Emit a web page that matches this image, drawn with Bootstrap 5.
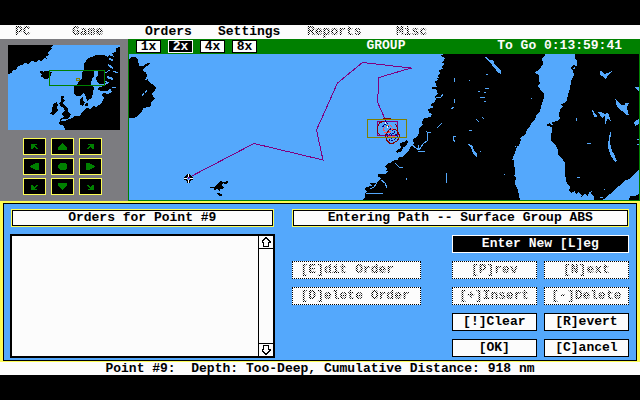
<!DOCTYPE html>
<html lang="en">
<head>
<meta charset="utf-8">
<meta name="viewport" content="width=device-width, initial-scale=1">
<title>Group orders</title>
<link href="https://cdn.jsdelivr.net/npm/bootstrap@5.3.0/dist/css/bootstrap.min.css" rel="stylesheet">
<style>
:root{--sea:#54a8fc;--paper:#fcfcfc;--glow:#fcfc54;--frame:#008000;--steel:#7c7c80}
body{background:#000;color:#000;font:bold 13px/14px "Liberation Mono",monospace;padding-top:25px}
h1,h2,button,.btn{font:inherit;margin:0}
svg{display:block;shape-rendering:crispEdges}
.menu-bar{background:var(--paper);display:grid;grid-template-columns:57px 73px 73px 89px 89px auto;padding-left:15px;height:14px}
.menu-bar button,.key{border:0;background:none;padding:0;text-align:left;color:#000;white-space:pre}
.menu-bar button:disabled span,.cmd:disabled span{color:transparent;background:repeating-conic-gradient(#000 0 25%,transparent 0 50%) 0 0/2px 2px;-webkit-background-clip:text;background-clip:text}
.side{background:var(--steel);width:128px;padding:6px 8px 5px}
.pad{display:grid;grid-template-columns:repeat(3,23px);gap:3px 5px;padding-left:15px;margin-top:8px}
.pad .key{background:#000;border:1px solid var(--glow);height:17px}
.pad svg{margin:auto}
.chart{background:var(--frame);border:solid var(--frame);border-width:0 1px 1px}
.tools{height:15px;color:var(--paper);display:grid;grid-template-columns:231fr auto 217fr;padding:0 17px 0 7px}
.zooms{gap:7px;padding-top:1px}
.zooms .key{width:25px;height:13px;line-height:11px;border:1px solid #000;background:var(--paper);text-align:center}
.zooms .key.on{background:#000;color:var(--paper);border-color:var(--paper)}
.chart svg{width:100%;background:var(--sea)}
.orders{border:solid var(--glow);border-width:2px 3px 1px}
.orders-in{border:1px solid #000;background:var(--sea);display:grid;grid-template-columns:265fr 338fr;gap:17px;padding:5px 7px 2px 6px}
.plate{background:var(--paper);border:1px solid #000;outline:1px solid var(--glow);height:16px;text-align:center;margin:1px 2px;white-space:pre}
h1.plate{margin:1px}
.list-area{border:2px solid #000;background:var(--paper);height:124px;margin-top:8px}
.scroller{width:15px;border-left:1px solid #000}
.scroller .key{height:13px;border-bottom:1px solid #000}
.scroller .key:last-child{border-bottom:0;border-top:1px solid #000}
.scroller svg{margin:auto}
.cmds{display:grid;grid-template-columns:129fr 17px 85fr 85fr;gap:8px 7px;margin-top:9px}
.cmd{height:18px;border:1px solid #000;background:var(--paper);border-radius:0;padding:0;line-height:16px;text-align:center;color:#000;white-space:pre}
.cmd:disabled{border-style:dotted;color:#000}
.cmd.start{text-align:left;padding-left:8px;grid-column:1}
.cmd.c3{grid-column:3}
.cmd.wide{grid-column:3/5;background:#000;color:var(--paper);border-color:var(--paper)}
.status{background:var(--paper);height:13px;line-height:13px;text-align:center;white-space:pre}
</style>
</head>
<body>
<nav class="menu-bar" aria-label="Main menu">
<button disabled><span>PC</span></button><button disabled><span>Game</span></button><button>Orders</button><button>Settings</button><button disabled><span>Reports</span></button><button disabled><span>Misc</span></button>
</nav>
<main>
<div class="d-flex">
<aside class="side flex-shrink-0">
<svg viewBox="8 45 112 85" width="112" height="85" role="img" aria-label="Overview map">
<path fill="#54a8fc" d="M8 45h112v85H8z"/>
<path d="M8 45H53L51 47 52 49 48 52 49 55 46 56 47 59 44 58 42 61 38 60 36 62 31 61 29 64 24 63 22 65 18 66 16 70 13 70 12 73 8 74zM40 71h3v1l2-1h3l1 1h3l-1 3-1 2-3 2h-3l-2-2-2-1 2-2-2-1z"/>
<path d="M120 47 116 48 116 52 112 53 114 57 109 55 108 57 104 55 96 55 92 57 88 58 86 61 84 64 84 70 82 72 82 78 79 81 77 85 74 86 74 93 76 96 80 96 83 93 85 94 86 98 88 102 89 99 92 98 93 92 94 88 91 85 92 78 94 76 94 70 98 71 98 75 96 78 97 82 100 84 103 84 107 82 109 83 104 86 99 87 98 90 101 91 108 91 110 88 112 92 108 94 103 93 102 96 104 98 101 104 96 107 93 106 91 109 86 108 82 112 80 116 75 116 72 118 65 121 60 121 59 124 64 126 65 130H120z"/>
<path d="M80 99 83 97 83 101 85 102 83 106 80 105zM86 103h2v3h-3zM61 96h3v2h-2l3 2-2 3 2 3 3 3 0 3 3 2-1 3-3 2h-4l-3 2 1-3 3-1-2-2 1-3 2-1-2-4-2 0-2-4 2-2zM54 103l3-1 1 3-1 3 1 2-3 3-2 2-3-1 2-3 0-2zM74 90h1v1h-1z"/>
<path fill="none" stroke="#54a8fc" stroke-width="2" d="M109 59l4 1M108 65l5 3M107 77l6 2"/><path fill="none" stroke="#54a8fc" d="M105 73l5-3M104 81l5 2M113 71l5 2M112 87l4 1"/>
<path fill="none" stroke="#008000" d="M49.500 70.500h55v15h-55z"/><path fill="none" stroke="#808000" d="M76.500 78.500h3v2h-3z"/>
</svg>
<div class="pad">
<button class="key" aria-label="North-west"><svg width="9" height="7" fill="#008000"><path d="M1 1h6v1H5v1h1v1h1v1h1v1H6V5H5V4H4v1H3v1H1z"/></svg></button>
<button class="key" aria-label="North"><svg width="9" height="7" fill="#008000"><path d="M4 0h1l4 5v2H0V5z"/></svg></button>
<button class="key" aria-label="North-east"><svg width="9" height="7" fill="#008000"><path d="M8 1H2v1h2v1H3v1H2v1H1v1h2V5h1V4h1v1h1v1h2z"/></svg></button>
<button class="key" aria-label="West"><svg width="9" height="7" fill="#008000"><path d="M9 0v7H6L0 4V3l6-3z"/></svg></button>
<button class="key" aria-label="Centre"><svg width="9" height="7" fill="#008000"><path d="M2 0h5l2 2v3L7 7H2L0 5V2z"/></svg></button>
<button class="key" aria-label="East"><svg width="9" height="7" fill="#008000"><path d="M0 0v7h3l6-3V3L3 0z"/></svg></button>
<button class="key" aria-label="South-west"><svg width="9" height="7" fill="#008000"><path d="M1 7h6V6H5V5h1V4h1V3h1V2H6v1H5v1H4V3H3V2H1z"/></svg></button>
<button class="key" aria-label="South"><svg width="9" height="7" fill="#008000"><path d="M0 0h9v2L5 7H4L0 2z"/></svg></button>
<button class="key" aria-label="South-east"><svg width="9" height="7" fill="#008000"><path d="M8 7H2V6h2V5H3V4H2V3H1V2h2v1h1v1h1V3h1V2h2z"/></svg></button>
</div>
</aside>
<section class="chart flex-grow-1">
<div class="tools">
<div class="zooms d-flex"><button class="key">1x</button><button class="key on" aria-pressed="true">2x</button><button class="key">4x</button><button class="key">8x</button></div>
<span>GROUP</span><span class="text-end">To Go 0:13:59:41</span>
</div>
<svg viewBox="129 54 510 146" role="img" aria-label="Norwegian Sea chart">
<path d="M129 59 130 58 132 57 136 57 137 59 138 60 138 63 139 64 139 66 143 66 145 64 148 63 150 63 149 65 146 66 144 69 142 70 144 72 146 72 147 76 146 78 145 80 148 79 149 82 152 84 154 86 156 88 155 91 152 93 153 97 155 99 151 102 151 106 149 107 143 108 142 112 139 114 137 117 133 118 129 118zM215 187 217 184 219 183 220 181 224 182 228 181 228 183 225 184 223 183 221 185 224 187 222 189 220 189 220 192 218 189 214 190 214 188 210 188 210 187zM217 193h3v1h2v2h-3l-1-2h-1z"/>
<path d="M445 54 441 55 442 57 445 58 444 61 441 62 445 64 442 66 443 69 439 70 440 74 438 75 439 78 436 78 438 80 434 82 436 84 437 87 432 87 432 89 436 89 438 94 435 96 436 99 435 102 430 105 434 107 428 109 429 113 432 114 431 117 424 118 422 122 423 125 419 128 419 133 417 137 413 139 414 144 410 147 409 151 405 154 402 157 399 157 398 160 394 160 393 163 389 163 385 166 387 169 385 171 389 171 385 174 378 174 378 177 381 178 376 183 370 183 372 186 366 187 364 189 367 191 365 194 365 197 363 200H520L518 190 515 184 516 177 513 176 515 174 514 160 512 160 516 150 517 146 519 146 521 140 520 138 523 136 526 134 527 129 530 127 531 123 534 121 536 117 537 114 540 112 541 107 544 97 544 93 541 91 540 88 537 86 540 84 539 80 539 76 537 74 534 73 540 69 543 64 542 58 545 56 545 54z"/>
<path d="M400 143l4-1 2-2 2 2-2 4-3 1-1 4-5 2-1-2 5-3zM391 162l4-2-1 5-4 0z"/>
<path d="M575 54 575 59 577 61 577 66 573 65 571 68 573 71 574 75 571 81 570 89 568 94 567 100 564 103 561 104 563 107 560 109 559 115 560 119 557 121 552 122 553 125 551 125 550 123 547 124 547 126 552 127 551 140 553 143 556 146 558 150 558 155 562 158 565 163 565 175 567 184 570 187 569 191 571 193 575 191 576 195 578 192 582 195 581 197 585 194 588 196 589 193 592 191 591 194 594 196 594 200H639V54z"/>
<g fill="#54a8fc"><path d="M485 57 487 57 489 60 493 60 495 65 499 69 501 70 501 74 498 73 496 70 493 67 491 63 488 61zM600 71 602 71 604 74 608 73 612 71 610 74 608 75 606 79 602 76 600 75zM615 98 621 105 625 105 625 103 629 103 627 107 628 112 629 115 626 115 622 111 617 107zM611 131 610 143 612 151 614 154 617 161 615 162 611 156 608 147 609 136zM639 170 633 175 630 179 625 180 621 185 616 188 612 193 607 196 605 199 600 198 600 200H629L630 196 635 196 639 194zM639 87h-5l2 2 3 2zM639 119l-5 3 1 4 4-2zM592 109l2 3 3 4-1 2-3-4zM598 112l3 0 4 2 2-2 2 3 2 6-3-2-4-3-2 2zM468 144l4 1 2 5 3 4v3l-3-2-3-7zM600 197h3v3h-3zM589 192h1v4h-1zM605 115l5 2-3 1-1 6h-1z"/></g>
<g fill="none" stroke="#54a8fc"><path d="M142 96l2-3M145 93l2-3"/><path d="M412 145l4 3 3 2 4-6 4-3 1-4-1-5 4 1M437 128l3-3 2-2M456 136h-3v3l2 3M446 173v6l1 4M436 98l5-1 2-3M454.500 82v-4M419 150l-1-5M388 150l4 1M381 180l4 3 2 5M366 193.500h17M395 163l4 4 4 1M370 189l4-2 3-4M406 178l1 2M451 109l3-2M454 99v4M485 88l4 1M484 92h2M480 97l5 1M484 101l2 1M478 91h2M486 74h2M476 119l3 3M482 117l2 2M576 118l1 3M587 143h4M577 177l3 1M504 174h1M469 130h3M480 151h1M469 80h1M531 98h1M604 189h1M515 146h1M637 139h2M637 144h2M594 116h3M418 151h7"/></g>
<path d="M573 68l2-1v2h-2z" fill="#54a8fc"/>
<path fill="none" stroke="#800080" d="M188 178 254 143.500 323 160 316.500 130 337.500 83 362.500 62.500 411 68 379 77.500 377.500 102 385 119M409 68.500h3M377.500 121.500h20v14h-20z"/>
<g fill="none" stroke="#800000"><path d="M383 118.500h8M383.500 121l-4 2-2 4v5l2 3M395.500 124l2 4v5l-2 3"/><path d="M389.500 129.500h6l3 3 1 4-2 4-4 2.500h-4l-3-3-1-5 2-3z"/></g>
<path fill="none" stroke="#000080" stroke-dasharray="2 1" d="M382.500 127l3-3v-3l2 3 3 5 4 3 3 5-4 3h-4l-3-5 7-2M387 137h10M391 134v6"/>
<path fill="none" stroke="#fc5454" stroke-dasharray="3 1" d="M383.500 129l3-4h4l2 4-3 3h-5zM388 136h7"/>
<path fill="#fcfcfc" d="M385 122h1v2h-1zM387 126h1v2h-1z"/><path fill="#00a800" d="M386 125h1v1h-1z"/>
<path fill="none" stroke="#808000" d="M367.500 119.500h39v18h-39z"/>
<path fill="none" stroke="#000" stroke-width="3" d="M188.500 174v3M188.500 180v3M184 178.500h3M190 178.500h3M186 176l1 1M191 176l-1 1M186 181l1-1M191 181l-1-1"/><path fill="none" stroke="#fcfcfc" d="M188.500 174v3M188.500 180v3M184 178.500h3M190 178.500h3"/><path fill="#800080" d="M188 178h1v1h-1z"/>
</svg>
</section>
</div>
<section class="orders"><div class="orders-in">
<div>
<h2 class="plate">Orders for Point #9</h2>
<div class="list-area d-flex justify-content-end"><div class="flex-grow-1" role="listbox" aria-label="Orders"></div>
<div class="scroller d-flex flex-column justify-content-between"><button class="key" aria-label="Scroll up"><svg width="10" height="10" fill="none" stroke="#000"><path d="M5 .5 9 4.500v1H7.500v4h-5v-4H1v-1z"/></svg></button><button class="key" aria-label="Scroll down"><svg width="10" height="10" fill="none" stroke="#000"><path d="M5 9.500 9 5.500v-1H7.500v-4h-5v4H1v1z"/></svg></button></div></div>
</div>
<div>
<h1 class="plate">Entering Path -- Surface Group ABS</h1>
<div class="cmds">
<button class="cmd wide">Enter New [L]eg</button>
<button class="cmd start" disabled><span>[E]dit Order</span></button><button class="cmd c3" disabled><span>[P]rev</span></button><button class="cmd" disabled><span>[N]ext</span></button>
<button class="cmd start" disabled><span>[D]elete Order</span></button><button class="cmd c3" disabled><span>[+]Insert</span></button><button class="cmd" disabled><span>[-]Delete</span></button>
<button class="cmd c3">[!]Clear</button><button class="cmd">[R]evert</button>
<button class="cmd c3">[OK]</button><button class="cmd">[C]ancel</button>
</div>
</div>
</div></section>
</main>
<footer class="status">Point #9:  Depth: Too-Deep, Cumulative Distance: 918 nm</footer>
<script src="https://cdn.jsdelivr.net/npm/bootstrap@5.3.0/dist/js/bootstrap.bundle.min.js"></script>
</body>
</html>
